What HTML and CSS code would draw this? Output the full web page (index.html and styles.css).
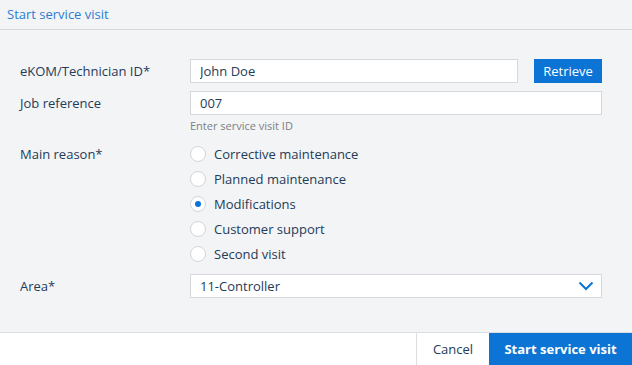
FILE: index.html
```html
<!DOCTYPE html>
<html lang="en">
<head>
    <meta charset="UTF-8">
    <meta name="viewport" content="width=device-width, initial-scale=1.0">
    <title>Start service visit</title>
    <link rel="stylesheet" href="styles.css">
</head>
<body>

    <div class="dialog-title">Start service visit</div>

    <!-- Form body -->
    <div class="form">
        <div class="row">
            <label class="label">eKOM/Technician ID*</label>
            <div class="field inline">
                <input type="text" class="text-input" value="John Doe">
                <button class="btn-small">Retrieve</button>
            </div>
        </div>

        <div class="row">
            <label class="label">Job reference</label>
            <div class="field">
                <input type="text" class="text-input" value="007">
                <div class="hint">Enter service visit ID</div>
            </div>
        </div>

        <div class="row">
            <label class="label radio-label">Main reason*</label>
            <div class="field radios">
                <label class="radio"><span class="dot"></span>Corrective maintenance</label>
                <label class="radio"><span class="dot"></span>Planned maintenance</label>
                <label class="radio"><span class="dot checked"></span>Modifications</label>
                <label class="radio"><span class="dot"></span>Customer support</label>
                <label class="radio"><span class="dot"></span>Second visit</label>
            </div>
        </div>

        <div class="row">
            <label class="label">Area*</label>
            <div class="field">
                <div class="select">
                    <span>11-Controller</span>
                    <svg width="16" height="10" viewBox="0 0 16 10">
                        <path d="M1.5 1.5 L8 8 L14.5 1.5" fill="none" stroke="#0b74d4" stroke-width="2"/>
                    </svg>
                </div>
            </div>
        </div>
    </div>

    <!-- Footer buttons -->
    <div class="footer">
        <button class="btn-cancel">Cancel</button>
        <button class="btn-primary">Start service visit</button>
    </div>

</body>
</html>
```

FILE: styles.css
```css
body {
    font-family: "Open Sans", "Noto Sans", sans-serif;
    font-size: 13px;
    background-color: #f3f4f6;
    color: #233b58;
    margin: 0;
    height: 365px;
    display: flex;
    flex-direction: column;
}

.dialog-title {
    height: 30px;
    line-height: 29px;
    padding-left: 7px;
    color: #2b7dd0;
    border-bottom: 1px solid #d6d8dc;
    box-sizing: border-box;
}

.form {
    flex-grow: 1;
    padding: 29px 30px 0 20px;
}

.row {
    display: flex;
    margin-bottom: 8px;
}

.label {
    width: 170px;
    flex-shrink: 0;
    line-height: 24px;
}

.radio-label {
    line-height: 26px;
}

.field {
    flex-grow: 1;
}

.field.inline {
    display: flex;
    gap: 16px;
}

.text-input {
    display: block;
    width: 100%;
    height: 24px;
    box-sizing: border-box;
    border: 1px solid #d6d8dc;
    background: white;
    padding: 0 9px;
    font-family: inherit;
    font-size: 13px;
    color: #233b58;
    outline: none;
}

.btn-small {
    flex-shrink: 0;
    width: 68px;
    height: 24px;
    border: none;
    background-color: #0b74d4;
    color: white;
    font-family: inherit;
    font-size: 13px;
    padding: 0;
}

.hint {
    font-size: 11px;
    color: #7a7f86;
    margin-top: 3px;
    line-height: 15px;
}

.radios {
    display: flex;
    flex-direction: column;
}

.radio {
    display: flex;
    align-items: center;
    height: 25px;
}

.dot {
    width: 14px;
    height: 14px;
    border: 1px solid #d3d5d9;
    border-radius: 50%;
    background: white;
    margin-right: 8px;
    display: flex;
    align-items: center;
    justify-content: center;
}

.dot.checked::after {
    content: "";
    width: 6px;
    height: 6px;
    border-radius: 50%;
    background: #0b74d4;
}

.select {
    height: 24px;
    box-sizing: border-box;
    border: 1px solid #d6d8dc;
    background: white;
    padding: 0 7px 0 9px;
    display: flex;
    align-items: center;
    justify-content: space-between;
}

.footer {
    height: 32px;
    background: white;
    border-top: 1px solid #dcdee2;
    display: flex;
    justify-content: flex-end;
}

.btn-cancel {
    width: 73px;
    border: none;
    border-left: 1px solid #dcdee2;
    background: white;
    color: #233b58;
    font-family: inherit;
    font-size: 13px;
    padding: 0;
}

.btn-primary {
    width: 143px;
    border: none;
    background-color: #0b74d4;
    color: white;
    font-family: inherit;
    font-size: 13px;
    font-weight: bold;
    padding: 0;
}
```
